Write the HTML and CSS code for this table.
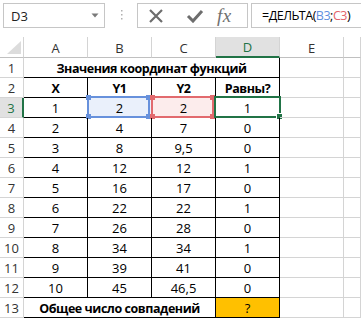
FILE: index.html
```html
<!DOCTYPE html>
<html>
<head>
<meta charset="utf-8">
<link rel="stylesheet" href="styles.css">
</head>
<body>
<div class="fbar">
  <div class="namebox"><span>D3</span><svg class="dd" width="8" height="5" viewBox="0 0 8 5"><path d="M0.5 0.5 H7.5 L4 4.5 Z" fill="#7a7a7a"/></svg></div>
  <div class="sep"><svg width="3" height="14" viewBox="0 0 3 14"><rect x="1" y="1" width="1.5" height="1.5" fill="#b0b0b0"/><rect x="1" y="5" width="1.5" height="1.5" fill="#b0b0b0"/><rect x="1" y="9" width="1.5" height="1.5" fill="#b0b0b0"/></svg></div>
  <div class="btns">
    <svg class="ic-x" width="16" height="16" viewBox="0 0 16 16"><path d="M2 2 L14 14 M14 2 L2 14" stroke="#6d6d6d" stroke-width="2.2" fill="none"/></svg>
    <svg class="ic-ok" width="18" height="14" viewBox="0 0 18 14"><path d="M2 7 L7 12 L16 2" stroke="#6d6d6d" stroke-width="3" fill="none"/></svg>
    <span class="fx">fx</span>
  </div>
  <div class="formula">=ДЕЛЬТА(<span class="rb">B3</span>;<span class="rr">C3</span>)</div>
</div>
<div class="sheet">
  <div class="h corner"><svg width="16" height="14" viewBox="0 0 16 14"><path d="M15 0 V13 H1 Z" fill="#dcdcdc"/></svg></div>
  <div class="h">A</div><div class="h">B</div><div class="h">C</div><div class="h hsel">D</div><div class="h">E</div><div class="h"></div>

  <div class="r">1</div><div class="c t span4 b">Значения координат функций</div><div class="c"></div><div class="c"></div>
  <div class="r">2</div><div class="c t b">X</div><div class="c t b">Y1</div><div class="c t b">Y2</div><div class="c t b">Равны?</div><div class="c"></div><div class="c"></div>
  <div class="r rsel">3</div><div class="c t">1</div><div class="c t selb">2<span class="rng rng-b"><i class="hd tl"></i><i class="hd tr"></i><i class="hd bl"></i><i class="hd br"></i></span></div><div class="c t selr">2<span class="rng rng-r"><i class="hd tl"></i><i class="hd tr"></i><i class="hd bl"></i><i class="hd br"></i></span></div><div class="c t">1<span class="act"><i class="fill"></i></span></div><div class="c"></div><div class="c"></div>
  <div class="r">4</div><div class="c t">2</div><div class="c t">4</div><div class="c t">7</div><div class="c t">0</div><div class="c"></div><div class="c"></div>
  <div class="r">5</div><div class="c t">3</div><div class="c t">8</div><div class="c t">9,5</div><div class="c t">0</div><div class="c"></div><div class="c"></div>
  <div class="r">6</div><div class="c t">4</div><div class="c t">12</div><div class="c t">12</div><div class="c t">1</div><div class="c"></div><div class="c"></div>
  <div class="r">7</div><div class="c t">5</div><div class="c t">16</div><div class="c t">17</div><div class="c t">0</div><div class="c"></div><div class="c"></div>
  <div class="r">8</div><div class="c t">6</div><div class="c t">22</div><div class="c t">22</div><div class="c t">1</div><div class="c"></div><div class="c"></div>
  <div class="r">9</div><div class="c t">7</div><div class="c t">26</div><div class="c t">28</div><div class="c t">0</div><div class="c"></div><div class="c"></div>
  <div class="r">10</div><div class="c t">8</div><div class="c t">34</div><div class="c t">34</div><div class="c t">1</div><div class="c"></div><div class="c"></div>
  <div class="r">11</div><div class="c t">9</div><div class="c t">39</div><div class="c t">41</div><div class="c t">0</div><div class="c"></div><div class="c"></div>
  <div class="r">12</div><div class="c t">10</div><div class="c t">45</div><div class="c t">46,5</div><div class="c t">0</div><div class="c"></div><div class="c"></div>
  <div class="r">13</div><div class="c t span3 b">Общее число совпадений</div><div class="c t orange">?</div><div class="c"></div><div class="c"></div>
</div>
</body>
</html>
```
FILE: styles.css
```css
html, body {
  margin: 0;
  padding: 0;
  background: #fff;
  overflow: hidden;
}
body {
  width: 361px;
  height: 319px;
  font-family: "Open Sans", "Noto Sans", sans-serif;
  font-size: 13px;
  color: #000;
}
.fbar {
  display: flex;
  align-items: center;
  padding-top: 3px;
  height: 25px;
}
.namebox {
  box-sizing: border-box;
  margin-left: 3px;
  width: 102px;
  height: 25px;
  border: 1px solid #c6c6c6;
  display: flex;
  align-items: center;
  justify-content: space-between;
  padding: 0 5px 0 7px;
  font-size: 13px;
  color: #222;
}
.sep {
  width: 31px;
  display: flex;
  justify-content: center;
  padding-left: 1px;
}
.btns {
  box-sizing: border-box;
  width: 111px;
  height: 25px;
  border: 1px solid #c6c6c6;
  display: flex;
  align-items: center;
  padding-left: 10px;
}
.ic-ok {
  margin-left: 22px;
}
.fx {
  margin-left: 13px;
  font-family: "Liberation Serif", serif;
  font-style: italic;
  font-size: 19px;
  color: #707070;
  line-height: 1;
  letter-spacing: 0.5px;
}
.formula {
  box-sizing: border-box;
  margin-left: 3px;
  flex: 1;
  height: 25px;
  border: 1px solid #c6c6c6;
  border-right: none;
  padding-left: 10px;
  display: flex;
  align-items: center;
  white-space: nowrap;
  overflow: hidden;
  font-size: 12.5px;
  letter-spacing: -0.5px;
}
.rb { color: #5f8fdf; }
.rr { color: #e3646b; }

.sheet {
  margin-top: 9px;
  display: grid;
  grid-template-columns: 24px repeat(5, 64px) 1fr;
  grid-template-rows: 21px repeat(13, 20px);
}
.sheet > div {
  box-sizing: border-box;
  border-right: 1px solid #d4d4d4;
  border-bottom: 1px solid #d4d4d4;
  display: flex;
  align-items: center;
  justify-content: center;
  position: relative;
  white-space: nowrap;
}
.h {
  color: #333;
  font-size: 13px;
  padding-top: 1px;
  border-bottom-color: #c0c0c0 !important;
}
.corner {
  align-items: flex-end !important;
  justify-content: flex-end !important;
  padding: 0 1px 2px 0;
}
.hsel {
  background: #e1e1e1;
  color: #217346;
  border-bottom: 2px solid #217346 !important;
}
.r {
  color: #333;
  font-size: 13px;
  padding-top: 1px;
}
.rsel {
  background: #e1e1e1;
  color: #217346;
  border-right: 2px solid #217346 !important;
}
.sheet > .t {
  border-right-color: #000;
  border-bottom-color: #000;
  padding-top: 1px;
}
.span4 { grid-column: span 4; }
.span3 { grid-column: span 3; }
.b {
  font-weight: bold;
  font-size: 12.5px;
  letter-spacing: -0.45px;
}
.orange { background: #ffc000; }
.selb { background: #eaf0fb; }
.selr { background: #fcecec; }

.rng {
  position: absolute;
  left: -1px;
  top: -2px;
  width: 63px;
  height: 22px;
  box-sizing: border-box;
  border: 2px solid #6791dc;
}
.rng-r { border-color: #e26a6e; left: -1px; }
.rng-r .hd { background: #e26a6e; }
.rng-b .hd { background: #6791dc; }
.hd {
  position: absolute;
  width: 5px;
  height: 5px;
}
.hd.tl { left: -3px; top: -3px; }
.hd.tr { right: -3px; top: -3px; }
.hd.bl { left: -3px; bottom: -3px; }
.hd.br { right: -3px; bottom: -3px; }
.act {
  position: absolute;
  left: -2px;
  top: -2px;
  width: 67px;
  height: 22px;
  box-sizing: border-box;
  border: 2px solid #217346;
}
.fill {
  position: absolute;
  right: -4px;
  bottom: -4px;
  width: 5px;
  height: 5px;
  background: #217346;
  border: 1px solid #fff;
}
```
